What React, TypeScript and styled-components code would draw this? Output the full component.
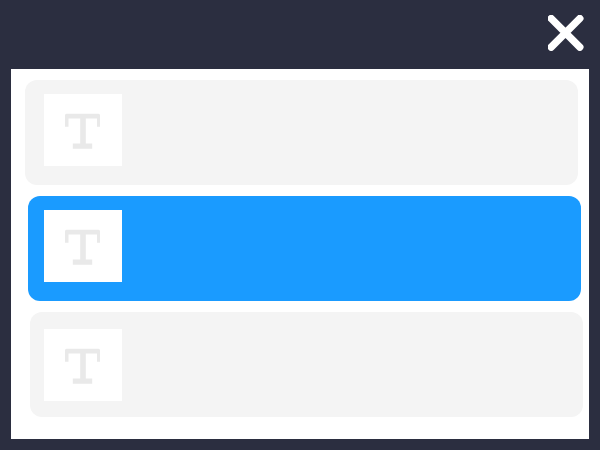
import React, { ReactElement } from 'react';
import styled, { createGlobalStyle } from 'styled-components';

const GlobalStyle = createGlobalStyle`
  html, body {
    margin: 0;
    height: 100%;
    background: #2b2e40;
    overflow: hidden;
  }
`;

const Page = styled.div`
  width: 600px;
  height: 450px;
  display: flex;
  flex-direction: column;
`;

const Header = styled.div`
  height: 69px;
  display: flex;
  justify-content: flex-end;
  align-items: flex-start;
  padding: 15px 16px 0 0;
  box-sizing: border-box;
`;

const CloseButton = styled.button`
  width: 36px;
  height: 36px;
  padding: 0;
  border: none;
  background: none;
  display: block;
`;

const Panel = styled.div`
  width: 578px;
  height: 370px;
  margin-left: 11px;
  background: #fff;
  box-sizing: border-box;
  padding-top: 11px;
  display: flex;
  flex-direction: column;
  gap: 11px;
`;

const Row = styled.div<{ $offset: number; $active?: boolean; $top: number }>`
  width: 553px;
  height: 105px;
  box-sizing: border-box;
  margin-left: ${(p) => p.$offset}px;
  padding: ${(p) => p.$top}px 0 0 ${(p) => 33 - p.$offset}px;
  border-radius: 12px;
  background: ${(p) => (p.$active ? '#1a9bff' : '#f4f4f4')};
`;

const Thumb = styled.div`
  width: 78px;
  height: 72px;
  background: #fff;
  display: flex;
  align-items: center;
  justify-content: center;
`;

const TextIcon = (): ReactElement => (
  <svg width="36" height="38" viewBox="0 0 36 38" fill="#e9e9e9">
    <path d="M1.5 2.8H33.5A1.5 1.5 0 0 1 35 4.3V15.8H32V7.5H20.8V32.6H27.2V37.7H7.8V32.6H15.2V7.5H3.5V15.8H0V4.3A1.5 1.5 0 0 1 1.5 2.8Z" />
  </svg>
);

const CloseIcon = (): ReactElement => (
  <svg width="36" height="36" viewBox="0 0 36 36">
    <path d="M3.2 3.5L31.8 32.1M31.8 3.5L3.2 32.1" stroke="#fff" strokeWidth="7.4" strokeLinecap="round" />
  </svg>
);

const rows = [
  { offset: 14, top: 14 },
  { offset: 17, top: 14, active: true },
  { offset: 19, top: 17 },
];

const App = (): ReactElement => {
  return (
    <Page>
      <GlobalStyle />
      <Header>
        <CloseButton aria-label="Close">
          <CloseIcon />
        </CloseButton>
      </Header>
      <Panel>
        {rows.map((row) => (
          <Row key={row.offset} $offset={row.offset} $top={row.top} $active={row.active}>
            <Thumb>
              <TextIcon />
            </Thumb>
          </Row>
        ))}
      </Panel>
    </Page>
  );
};

export default App;
